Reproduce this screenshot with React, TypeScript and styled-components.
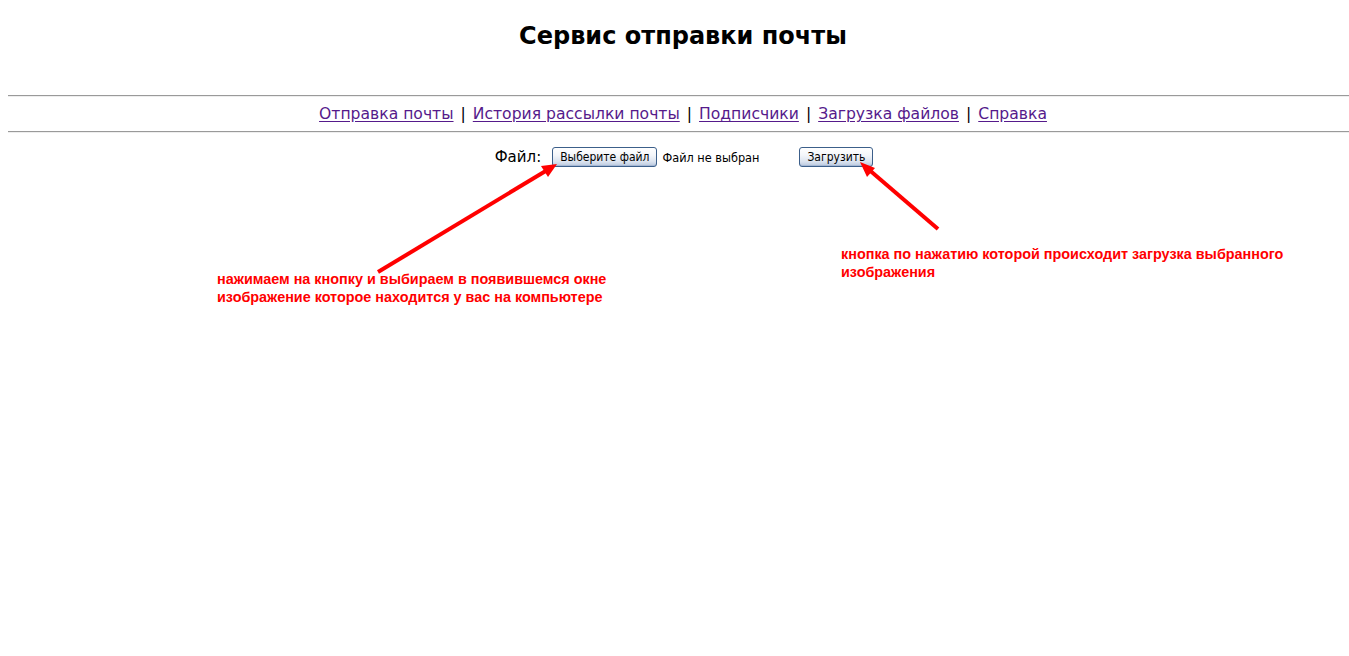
import React from "react";
import styled, { createGlobalStyle } from "styled-components";

const Global = createGlobalStyle`
  html { overflow: hidden; }
  html, body { padding: 0; background: #ffffff; }
  html { margin: 0; }
  body { margin: 8px 0 8px 8px; font-family: "DejaVu Sans", sans-serif; color: #000; }
`;

const Page = styled.div`
  position: relative;
  display: flow-root;
  width: 1350px;
  min-height: 640px;
`;

const Title = styled.h1`
  margin: 14px 0 0;
  font-family: "DejaVu Sans", sans-serif;
  font-weight: bold;
  font-size: 24px;
  line-height: 28px;
  text-align: center;
`;

const Rule = styled.div`
  height: 0;
  border-top: 1px solid #9a9a9a;
  border-bottom: 1px solid #eeeeee;
`;

const TopRule = styled(Rule)`
  margin-top: 45px;
`;

const Nav = styled.nav`
  display: flex;
  justify-content: center;
  align-items: center;
  height: 34px;
  font-family: "DejaVu Sans", sans-serif;
  font-size: 15.6px;
  font-weight: normal;
`;

const NavLink = styled.a`
  color: #551a8b;
  text-decoration: underline;
  text-underline-offset: 2px;
`;

const Sep = styled.span`
  color: #000;
  margin: 0 7px;
`;

const FileRow = styled.form`
  display: flex;
  justify-content: center;
  align-items: center;
  margin-top: 14px;
  padding-left: 2px;
  height: 20px;
`;

const Label = styled.span`
  font-family: "DejaVu Sans", sans-serif;
  font-size: 15px;
  margin-right: 11px;
`;

const XpButton = styled.button`
  height: 20px;
  padding: 0 7px;
  font-family: "DejaVu Sans Condensed", "DejaVu Sans", sans-serif;
  font-size: 12px;
  color: #000;
  border: 1px solid #3c5f8a;
  border-radius: 3px;
  background: linear-gradient(#ffffff 0%, #f4f6fa 40%, #dbe3ef 75%, #b9c8de 100%);
  box-shadow: inset 0 -1px 0 #a6b8d4;
  cursor: pointer;
`;

const NoFile = styled.span`
  font-family: "DejaVu Sans Condensed", "DejaVu Sans", sans-serif;
  font-size: 12.6px;
  margin-left: 5px;
  width: 137px;
`;

const Notes = styled.div`
  display: flex;
  align-items: flex-start;
  padding-left: 209px;
  margin-top: 78px;
`;

const Note = styled.p<{ $top: number; $width: number }>`
  margin: ${(p) => p.$top}px 0 0;
  width: ${(p) => p.$width}px;
  font-family: "Liberation Sans", Arial, sans-serif;
  font-weight: bold;
  font-size: 14.4px;
  line-height: 18px;
  color: #ff0000;
`;

const Arrows = styled.svg`
  position: absolute;
  left: -8px;
  top: -8px;
  width: 1349px;
  height: 656px;
  pointer-events: none;
`;

export default function App() {
  return (
    <Page>
      <Global />
      <Title>Сервис отправки почты</Title>
      <TopRule />
      <Nav>
        <NavLink href="#">Отправка почты</NavLink>
        <Sep>|</Sep>
        <NavLink href="#">История рассылки почты</NavLink>
        <Sep>|</Sep>
        <NavLink href="#">Подписчики</NavLink>
        <Sep>|</Sep>
        <NavLink href="#">Загрузка файлов</NavLink>
        <Sep>|</Sep>
        <NavLink href="#">Справка</NavLink>
      </Nav>
      <Rule />
      <FileRow onSubmit={(e) => e.preventDefault()}>
        <Label>Файл:</Label>
        <XpButton type="button">Выберите файл</XpButton>
        <NoFile>Файл не выбран</NoFile>
        <XpButton type="submit">Загрузить</XpButton>
      </FileRow>
      <Notes>
        <Note $top={25} $width={624}>
          нажимаем на кнопку и выбираем в появившемся окне
          <br />
          изображение которое находится у вас на компьютере
        </Note>
        <Note $top={0} $width={480}>
          кнопка по нажатию которой происходит загрузка выбранного
          <br />
          изображения
        </Note>
      </Notes>
      <Arrows viewBox="0 0 1349 656">
        <g stroke="#ff0000" strokeWidth="4" fill="#ff0000" strokeLinecap="butt">
          <line x1="378" y1="272" x2="549" y2="169" />
          <polygon points="557,164 541,166 548,177" stroke="none" />
          <line x1="938" y1="229" x2="867" y2="168" />
          <polygon points="860,162 867,177 875,168" stroke="none" />
        </g>
      </Arrows>
    </Page>
  );
}
